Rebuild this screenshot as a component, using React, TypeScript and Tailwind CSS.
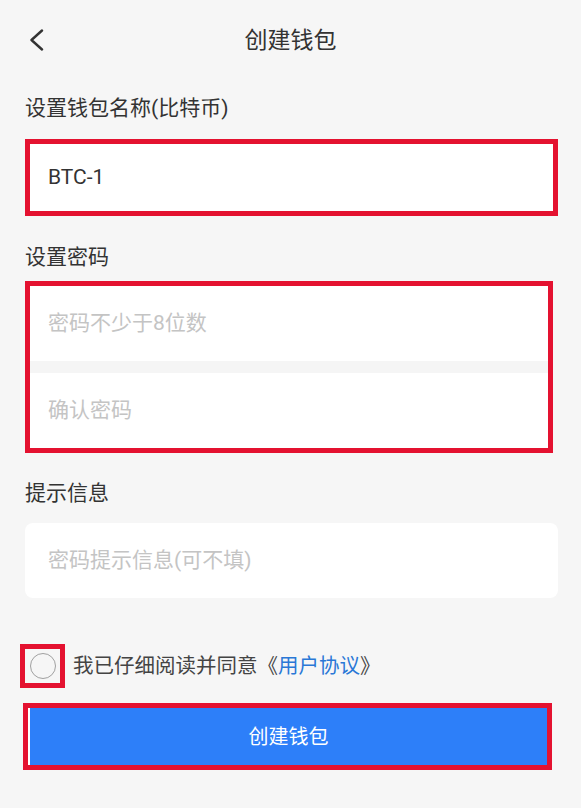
import React from "react";

export default function App() {
  return (
    <div className="w-full min-h-[808px] bg-[#f6f6f6] text-[#333333] font-['Roboto','Noto_Sans_CJK_SC',sans-serif]">
      {/* Header */}
      <div className="h-[80px] grid grid-cols-[1fr_auto_1fr] items-center px-[29px]">
        <div className="flex items-center">
          <svg width="15" height="22" viewBox="0 0 15 22" fill="none">
            <path d="M13 1.5 L2.5 11 L13 20.5" stroke="#333333" strokeWidth="2.4" strokeLinecap="round" strokeLinejoin="round" />
          </svg>
        </div>
        <div className="text-[23px] leading-none text-[#333333]">创建钱包</div>
        <div />
      </div>

      <div className="px-[25px]">
        {/* Label 1 */}
        <div className="mt-[14px] text-[21px] leading-[28px]">设置钱包名称(比特币)</div>
        <div className="mt-[17px] w-[533px] h-[77px] border-[5px] border-[#e41230] bg-white flex items-center pl-[18px]">
          <span className="text-[21px] text-[#333333]">BTC-1</span>
        </div>

        {/* Label 2 */}
        <div className="mt-[27px] text-[21px] leading-[28px]">设置密码</div>
        <div className="mt-[10px] w-[528px] h-[172px] border-[5px] border-[#e41230] bg-white flex flex-col">
          <div className="h-[75px] flex items-center pl-[18px] text-[21px] text-[#c4c4c4]">密码不少于8位数</div>
          <div className="h-[12px] bg-[#f5f5f5]" />
          <div className="h-[75px] flex items-center pl-[18px] text-[21px] text-[#c4c4c4]">确认密码</div>
        </div>

        {/* Label 3 */}
        <div className="mt-[26px] text-[21px] leading-[28px]">提示信息</div>
        <div className="mt-[16px] w-[533px] h-[75px] rounded-[8px] bg-white flex items-center pl-[23px] text-[21px] text-[#c4c4c4]">
          密码提示信息(可不填)
        </div>

        {/* Agreement */}
        <div className="mt-[46px] flex items-center ml-[-5px]">
          <div className="w-[45px] h-[44px] border-[5px] border-[#e41230] flex items-center justify-center">
            <div className="w-[26px] h-[26px] rounded-full border-[1.5px] border-[#a0a0a0]" />
          </div>
          <div className="ml-[8px] text-[20.5px] text-[#444444]">
            我已仔细阅读并同意《<span className="text-[#2a78d6]">用户协议</span>》
          </div>
        </div>

        {/* Button */}
        <div className="mt-[15px] ml-[-2px] w-[529px] h-[67px] border-[5px] border-[#e41230] bg-white flex">
          <div className="flex-1 ml-[2px] bg-[#2d7ff9] flex items-center justify-center text-white text-[20px]">
            创建钱包
          </div>
        </div>
      </div>
    </div>
  );
}
